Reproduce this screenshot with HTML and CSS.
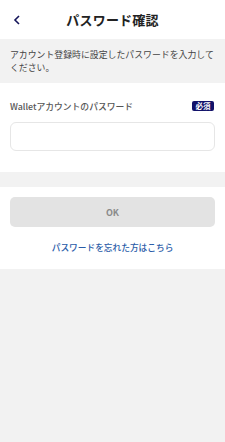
FILE: index.html
```html
<!DOCTYPE html>
<html lang="ja">
<head>
<meta charset="utf-8">
<link rel="stylesheet" href="styles.css">
</head>
<body>
<header class="header">
  <span class="back"><svg width="8" height="10" viewBox="0 0 8 10"><path d="M6 1 L2 5 L6 9" fill="none" stroke="#14145a" stroke-width="1.6"/></svg></span>
  <h1 class="title">パスワード確認</h1>
</header>
<section class="notice">アカウント登録時に設定したパスワードを入力してください。</section>
<section class="form">
  <div class="label-row">
    <span class="label">Walletアカウントのパスワード</span>
    <span class="badge">必須</span>
  </div>
  <div class="input"></div>
</section>
<div class="gap"></div>
<section class="actions">
  <div class="btn">OK</div>
  <a class="link">パスワードを忘れた方はこちら</a>
</section>
</body>
</html>
```
FILE: styles.css
```css
* { box-sizing: border-box; margin: 0; padding: 0; }
html, body { background: #f2f2f2; }
body {
  font-family: "Noto Sans CJK JP", "Noto Sans", sans-serif;
  color: #333;
  width: 225px;
}
.header {
  height: 39px;
  background: #fff;
  display: flex;
  align-items: center;
  justify-content: center;
  position: relative;
}
.back {
  position: absolute;
  left: 13px;
  top: 15px;
  display: flex;
}
.title {
  font-size: 13px;
  font-weight: 600;
  color: #222;
  letter-spacing: 0.2px;
}
.notice {
  padding: 9px 10px 9px;
  font-size: 8.9px;
  line-height: 13px;
  color: #444;
}
.form {
  background: #fff;
  padding: 16px 10px 21px;
}
.label-row {
  display: flex;
  justify-content: space-between;
  align-items: center;
  height: 14px;
}
.label {
  font-size: 8.8px;
  font-weight: 500;
  color: #555;
}
.badge {
  background: #12126a;
  color: #fff;
  font-size: 7.5px;
  font-weight: 700;
  border-radius: 2px;
  width: 22px;
  height: 10px;
  line-height: 10px;
  text-align: center;
  margin-right: 1px;
}
.input {
  margin-top: 9px;
  height: 29px;
  border: 1px solid #e6e6e6;
  border-radius: 6px;
  background: #fff;
}
.gap { height: 15px; }
.actions {
  background: #fff;
  padding: 10px 10px 0;
  height: 82px;
  display: flex;
  flex-direction: column;
  align-items: center;
}
.btn {
  width: 100%;
  height: 30px;
  background: #e3e3e3;
  border-radius: 5px;
  font-size: 9px;
  font-weight: 700;
  color: #8a8a8a;
  display: flex;
  align-items: center;
  justify-content: center;
}
.link {
  margin-top: 14px;
  font-size: 8.7px;
  font-weight: 500;
  color: #2a5ca8;
}
```
